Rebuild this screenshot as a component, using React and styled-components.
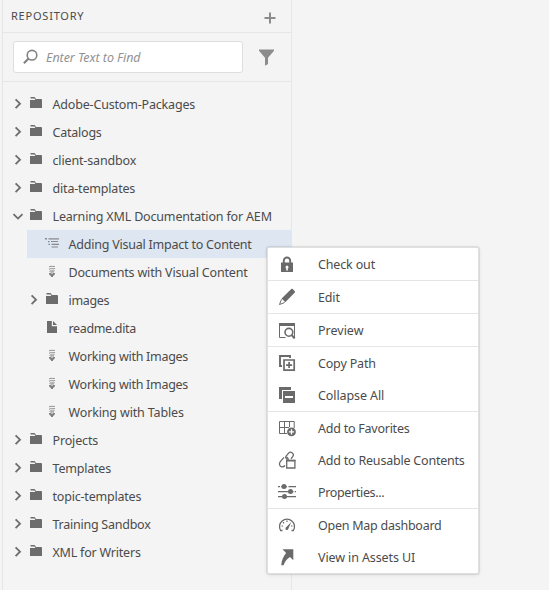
import React from 'react';
import styled, { createGlobalStyle } from 'styled-components';

const Global = createGlobalStyle`
  * { box-sizing: border-box; }
  body { margin: 0; background: #f4f4f4; }
`;

const Page = styled.main`
  position: relative;
  width: 549px;
  height: 590px;
  padding-left: 2px;
  overflow: hidden;
  background: #f4f4f4;
  color: #4b4b4b;
  font: 12.5px/20px 'Noto Sans', sans-serif;
`;
const Panel = styled.aside`
  display: flex;
  flex-direction: column;
  width: 290px;
  height: 100%;
  border: solid #e6e6e6;
  border-width: 0 1px;
`;
const Header = styled.header`
  display: flex;
  justify-content: space-between;
  height: 33px;
  padding: 6px 15px 0 8px;
  border-bottom: 1px solid #e6e6e6;
`;
const Title = styled.h1`
  margin: 0;
  font-size: 11px;
  font-weight: 400;
  line-height: 20px;
  letter-spacing: 0.78px;
`;
const PlainButton = styled.button`
  display: flex;
  padding: 0;
  border: 0;
  background: none;
  color: #8c8c8c;
`;
const AddButton = styled(PlainButton)`
  margin-top: 6px;
  align-self: flex-start;
`;
const SearchBar = styled.div`
  display: flex;
  align-items: center;
  gap: 15px;
  height: 49px;
  padding: 0 0 0 10px;
  border-bottom: 1px solid #e6e6e6;
`;
const SearchBox = styled.label`
  display: flex;
  align-items: center;
  gap: 7px;
  width: 230px;
  height: 32px;
  padding-left: 9px;
  border: 1px solid #dedede;
  border-radius: 3px;
  background: #fff;
  color: #828282;
`;
const SearchInput = styled.input`
  flex: 1;
  min-width: 0;
  padding: 2px 0 0;
  border: 0;
  outline: 0;
  background: none;
  font: italic 12.5px/20px 'Noto Sans', sans-serif;
  letter-spacing: -0.05px;
  color: #929292;
  &::placeholder { color: #929292; opacity: 1; }
`;
const Tree = styled.ul`
  margin: 0;
  padding: 8px 0 0;
  list-style: none;
`;
const TreeRow = styled.li`
  display: flex;
  align-items: center;
  height: 28px;
  margin-left: ${(p) => 8 + p.$level * 16}px;
  background: ${(p) => (p.$selected ? '#dee6f2' : 'transparent')};
`;
const Slot = styled.span`
  display: flex;
  width: ${(p) => p.$width}px;
  color: #6c6c6c;
`;
const Label = styled.span`
  padding-top: 2px;
  white-space: nowrap;
  letter-spacing: ${(p) => (p.$track || 0) - 0.05}px;
`;
const Menu = styled.div`
  position: absolute;
  top: 247px;
  left: 267px;
  width: 212px;
  border: 1px solid #e0e0e0;
  border-radius: 2px;
  background: #fff;
  box-shadow: 0 0 0 1px rgba(0, 0, 0, 0.07), 0 1px 4px rgba(0, 0, 0, 0.1);
`;
const MenuGroup = styled.div`
  & + & { border-top: 1px solid #e5e5e5; }
`;
const MenuItem = styled.div`
  display: flex;
  align-items: center;
  gap: 22px;
  height: 32px;
  padding-left: 10px;
  color: #4b4b4b;
`;
const MenuIcon = styled.svg`
  flex: none;
  width: 18px;
  height: 18px;
  color: #6a6a6a;
`;

const Plus = () => (
  <svg width="12" height="12" viewBox="0 0 12 12" fill="none" stroke="currentColor" strokeWidth="2">
    <path d="M6 .5v11M.5 6h11" />
  </svg>
);
const Search = () => (
  <svg width="16" height="16" viewBox="0 0 16 16" fill="none" stroke="currentColor">
    <circle cx="9" cy="6.2" r="4.8" strokeWidth="1.6" />
    <path d="M5.6 9.6L.9 14.2" strokeWidth="2.1" />
  </svg>
);
const Funnel = () => (
  <svg width="17" height="17" viewBox="0 0 17 17" fill="currentColor">
    <path d="M1 .5h15v1.2L10 8.7V15l-3 1.8V8.7L1 1.7z" />
  </svg>
);
const Chevron = ({ open }) => (
  <svg width="14" height="14" viewBox="0 0 14 14" fill="none" stroke="currentColor" strokeWidth="1.8">
    <path d={open ? 'M2.5 5.2L7 9.6l4.500-4.400' : 'M4.600 2.300L9 6.700l-4.400 4.400'} />
  </svg>
);

const fileIcons = {
  folder: (
    <path fill="currentColor" d="M2.500 1h4l1.500 2h5.500l.5 1v8H2V4h5.300L6.500 2.500h-4z" />
  ),
  file: <path fill="currentColor" d="M3 1h4.800v5.200H13V13H3zM9 1l4 4H9z" />,
  map: (
    <path fill="currentColor" opacity=".75" d="M1 2h2v1.600H1zM4.500 2.300H15v1.100H4.500zM4 5h1.500v1.200H4zM7 5h7v1.100H7zM4.500 7.700h1.500V9H4.500zM7.500 7.800H15V9H7.500zM7.500 10.400H14v1.100H7.500z" />
  ),
  topic: (
    <g fill="none" stroke="currentColor" opacity=".85">
      <path d="M5 3.200c1.300-1.800 2.500-.3 5.800-.8M5 5.400c2-1.700 3.300.1 6-.9M5.500 7.500c1.500-1.400 3 .1 5-.8" strokeWidth=".9" />
      <path d="M7.200 7.200v3M9 7.200v3" strokeWidth=".8" />
      <path d="M5 9h2v1h2V9h2c.1 1.400-.8 2.600-2 3v1H7v-1c-1.300-.4-2.100-1.600-2-3z" fill="currentColor" stroke="none" />
    </g>
  ),
};

const menuIcons = {
  lock: (
    <>
      <path d="M5.800 8V5.700a3.200 3.200 0 0 1 6.400 0V8" fill="none" stroke="currentColor" strokeWidth="1.900" />
      <path fillRule="evenodd" fill="currentColor" d="M3 7.500h12V17H3zM8.200 13.500v2h1.600v-2a1.500 1.500 0 1 0-1.600 0z" />
    </>
  ),
  edit: (
    <>
      <path fill="currentColor" d="M13.300 1.100c.5-.5 1-.4 1.400 0l2.100 2.100c.4.4.4.9 0 1.400L7.300 14.200l-3.700-3.700z" />
      <path d="M3.500 11.300L1.500 16.500l5.200-2" fill="none" stroke="currentColor" />
    </>
  ),
  preview: (
    <>
      <path fill="currentColor" d="M1 2h16v3H1z" />
      <path d="M1.500 4v12.500h6M16.500 4v12" fill="none" stroke="currentColor" />
      <circle cx="10.900" cy="11.300" r="3.900" fill="#fff" stroke="currentColor" strokeWidth="1.600" />
      <path d="M13.500 13.900l3.200 3.600" stroke="currentColor" strokeWidth="2" />
    </>
  ),
  copy: (
    <g fill="none" stroke="currentColor">
      <path d="M4 12H2V2h10v2" strokeWidth="1.900" />
      <path d="M6 6h10.200v10.200H6z" strokeWidth="1.700" />
      <path d="M11.100 8.100v6M8.100 11.100h6" strokeWidth="1.700" />
    </g>
  ),
  collapse: (
    <path fillRule="evenodd" fill="currentColor" d="M1 1h12v3H4v9H1zM5 5h12v12H5zM7 10v2h8v-2z" />
  ),
  favorite: (
    <>
      <path d="M1.500 2.500h14.700V9M1.500 2.500v12H9M6.500 2.500v12M11.500 2.500V8M1.500 8.500H11" fill="none" stroke="currentColor" />
      <circle cx="13.500" cy="12.900" r="4.400" fill="currentColor" />
      <path d="M13.500 10.300v5.200M10.900 12.900h5.200" stroke="#fff" strokeWidth="1.300" />
    </>
  ),
  reuse: (
    <g fill="none" stroke="currentColor" strokeWidth="1.300">
      <path d="M9.800 8.400c-1.800-.3-2.500-1.900-1.700-3.300L10.600 2.200c1-1.200 2.600-1.200 3.700-.3 1.100.9 1.300 2.400.5 3.500L13 7.800" />
      <path d="M8.200 6.200c2 .4 2.400 2 1.600 3.200M6 6.300L2.300 10.600c-1.500 1.900-.8 4.300.8 5 1.400.6 2.900.2 3.900-1.100" />
      <path d="M8.700 9.700h8.200v7.300H8.700z" fill="#fff" />
      <path d="M8.100 9.500h9.400" strokeWidth="1.700" />
    </g>
  ),
  properties: (
    <g fill="currentColor">
      <path d="M0 3h18v1.200H0zM0 8h18v1.200H0zM0 13h18v1.200H0z" />
      <path d="M2 2.500h1.200v2.200H2zM9 2.500h1.500v2.200H9zM15.500 7.500h1.300v2.200h-1.300z" fill="#fff" />
      <circle cx="6" cy="3.600" r="2.500" />
      <circle cx="12.500" cy="8.600" r="2.500" />
      <circle cx="6.500" cy="13.600" r="2.500" />
    </g>
  ),
  dashboard: (
    <>
      <path d="M4.500 14.500H2.600a7.500 7.500 0 1 1 12.800 0h-1.900" fill="none" stroke="currentColor" strokeWidth="1.300" />
      <path d="M3.500 10h1.600M5 6.200l1.100 1.100M9 4.500v1.600M14.500 10h-1.600" stroke="currentColor" strokeWidth="1.200" />
      <path fill="currentColor" d="M13.300 5.900l-2.900 6.500a1.500 1.500 0 1 1-2-1.300z" />
    </>
  ),
  arrow: (
    <path fill="currentColor" d="M4.500 1.300h10.800v11l-3.300-3.200C8.500 11.600 6.500 14 5.600 17.300H3.300C3.500 12.600 5.200 8.700 8.100 5.100z" />
  ),
};

const nodes = [
  { text: 'Adobe-Custom-Packages', icon: 'folder', arrow: true, track: -0.13 },
  { text: 'Catalogs', icon: 'folder', arrow: true, track: -0.17 },
  { text: 'client-sandbox', icon: 'folder', arrow: true, track: -0.1 },
  { text: 'dita-templates', icon: 'folder', arrow: true, track: -0.13 },
  { text: 'Learning XML Documentation for AEM', icon: 'folder', arrow: true, open: true, track: -0.12 },
  { text: 'Adding Visual Impact to Content', icon: 'map', level: 1, selected: true, track: -0.17 },
  { text: 'Documents with Visual Content', icon: 'topic', level: 1, track: -0.12 },
  { text: 'images', icon: 'folder', arrow: true, level: 1, track: -0.3 },
  { text: 'readme.dita', icon: 'file', level: 1, track: -0.3 },
  { text: 'Working with Images', icon: 'topic', level: 1, track: -0.23 },
  { text: 'Working with Images', icon: 'topic', level: 1, track: -0.23 },
  { text: 'Working with Tables', icon: 'topic', level: 1, track: -0.1 },
  { text: 'Projects', icon: 'folder', arrow: true, track: -0.1 },
  { text: 'Templates', icon: 'folder', arrow: true, track: -0.15 },
  { text: 'topic-templates', icon: 'folder', arrow: true, track: -0.15 },
  { text: 'Training Sandbox', icon: 'folder', arrow: true, track: -0.2 },
  { text: 'XML for Writers', icon: 'folder', arrow: true, track: -0.16 },
];

const groups = [
  [['lock', 'Check out', -0.1]],
  [['edit', 'Edit', -0.1]],
  [['preview', 'Preview', 0.05]],
  [['copy', 'Copy Path', -0.12], ['collapse', 'Collapse All', -0.05]],
  [['favorite', 'Add to Favorites', -0.19], ['reuse', 'Add to Reusable Contents', -0.16], ['properties', 'Properties...', -0.3]],
  [['dashboard', 'Open Map dashboard', -0.2], ['arrow', 'View in Assets UI', -0.06]],
];

export default function App() {
  return (
    <>
      <Global />
      <Page>
        <Panel>
          <Header>
            <Title>REPOSITORY</Title>
            <AddButton aria-label="Add"><Plus /></AddButton>
          </Header>
          <SearchBar>
            <SearchBox>
              <Search />
              <SearchInput placeholder="Enter Text to Find" />
            </SearchBox>
            <PlainButton aria-label="Filter"><Funnel /></PlainButton>
          </SearchBar>
          <Tree>
            {nodes.map((n, i) => (
              <TreeRow key={i} $level={n.level || 0} $selected={n.selected}>
                <Slot $width={17}>{n.arrow && <Chevron open={n.open} />}</Slot>
                <Slot $width={24.5}>
                  <svg width="16" height="16" viewBox="0 0 16 16">{fileIcons[n.icon]}</svg>
                </Slot>
                <Label $track={n.track}>{n.text}</Label>
              </TreeRow>
            ))}
          </Tree>
        </Panel>
        <Menu role="menu">
          {groups.map((items, i) => (
            <MenuGroup key={i}>
              {items.map(([icon, text, track]) => (
                <MenuItem key={text} role="menuitem">
                  <MenuIcon viewBox="0 0 18 18">{menuIcons[icon]}</MenuIcon>
                  <Label $track={track}>{text}</Label>
                </MenuItem>
              ))}
            </MenuGroup>
          ))}
        </Menu>
      </Page>
    </>
  );
}
